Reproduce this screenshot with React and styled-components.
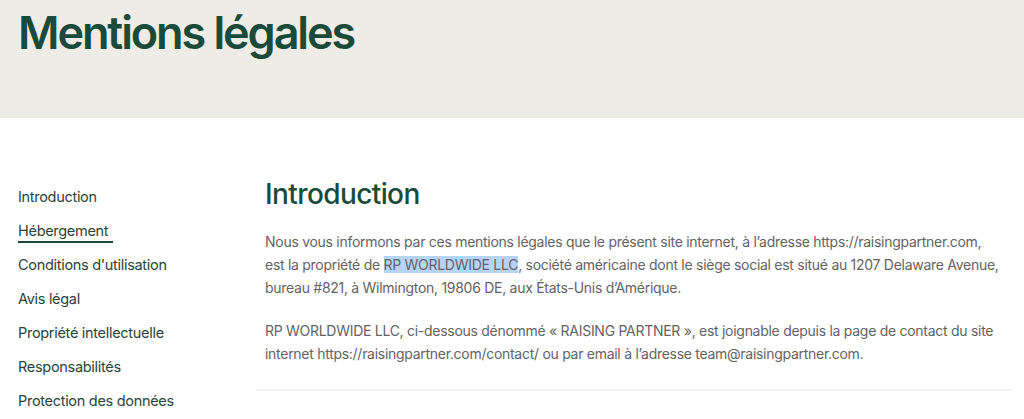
import React from "react";
import styled, { createGlobalStyle } from "styled-components";

const Global = createGlobalStyle`
  html, body { margin: 0; padding: 0; background: #ffffff; }
  body { font-family: Inter, "Noto Sans", sans-serif; -webkit-font-smoothing: antialiased; }
  * { box-sizing: border-box; }
`;

const Hero = styled.header`
  height: 118px;
  background: #eeece7;
  padding: 5px 18px 0;
`;

const Title = styled.h1`
  margin: 0;
  font-size: 45px;
  line-height: 56px;
  font-weight: 600;
  letter-spacing: -2.1px;
  color: #1c4a3a;
`;

const Main = styled.div`
  display: flex;
  padding: 58px 12px 0 18px;
`;

const Sidebar = styled.nav`
  width: 247px;
  flex: none;
  display: flex;
  flex-direction: column;
  gap: 13px;
  padding-top: 10px;
`;

const NavItem = styled.a`
  align-self: flex-start;
  font-size: 14.5px;
  line-height: 21px;
  letter-spacing: -0.3px;
  color: #2a4438;
  text-decoration: none;
  padding-right: ${p => (p.$active ? "5px" : "0")};
  border-bottom: 2px solid ${p => (p.$active ? "#1c4a3a" : "transparent")};
  margin-bottom: -2px;
`;

const Content = styled.section`
  flex: 1;
  display: flex;
  flex-direction: column;
`;

const Heading = styled.h2`
  margin: 0 0 18px 0;
  font-size: 28px;
  line-height: 36px;
  font-weight: 500;
  letter-spacing: -0.6px;
  color: #1c4a3a;
`;

const Para = styled.p`
  margin: 0 0 20px 0;
  font-size: 14px;
  line-height: 23px;
  letter-spacing: -0.28px;
  color: #636363;
  white-space: nowrap;
`;

const Mark = styled.span`
  background: #b6d4f8;
`;

const Divider = styled.hr`
  margin: 4px 0 0 -9px;
  border: none;
  height: 2px;
  background: #f3f3f3;
`;

const items = [
  "Introduction",
  "Hébergement",
  "Conditions d'utilisation",
  "Avis légal",
  "Propriété intellectuelle",
  "Responsabilités",
  "Protection des données",
];

export default function App() {
  return (
    <>
      <Global />
      <Hero>
        <Title>Mentions légales</Title>
      </Hero>
      <Main>
        <Sidebar>
          {items.map(t => (
            <NavItem key={t} $active={t === "Hébergement"}>{t}</NavItem>
          ))}
        </Sidebar>
        <Content>
          <Heading>Introduction</Heading>
          <Para>
            Nous vous informons par ces mentions légales que le présent site internet, à l’adresse https://raisingpartner.com,
            <br />
            est la propriété de <Mark>RP WORLDWIDE LLC</Mark>, société américaine dont le siège social est situé au 1207 Delaware Avenue,
            <br />
            bureau #821, à Wilmington, 19806 DE, aux États-Unis d’Amérique.
          </Para>
          <Para>
            RP WORLDWIDE LLC, ci-dessous dénommé « RAISING PARTNER », est joignable depuis la page de contact du site
            <br />
            internet https://raisingpartner.com/contact/ ou par email à l’adresse team@raisingpartner.com.
          </Para>
          <Divider />
        </Content>
      </Main>
    </>
  );
}
